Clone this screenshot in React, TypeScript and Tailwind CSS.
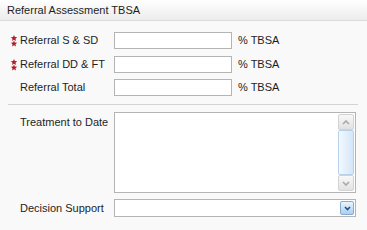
import React from "react";

const font = { fontFamily: '"Liberation Sans", Arial, sans-serif' };

function Stars() {
  return (
    <svg width="8" height="12" viewBox="0 0 8 12" className="block">
      <polygon
        points="4,0 4.9,2.1 7.2,2.3 5.5,3.8 6,6 4,4.8 2,6 2.5,3.8 0.8,2.3 3.1,2.1"
        fill="#b0202a"
      />
      <polygon
        points="4,5.5 4.9,7.6 7.2,7.8 5.5,9.3 6,11.5 4,10.3 2,11.5 2.5,9.3 0.8,7.8 3.1,7.6"
        fill="#b0202a"
      />
    </svg>
  );
}

function Row({ label, required }: { label: string; required?: boolean }) {
  return (
    <div className="flex h-[17px] items-center">
      <div className="flex w-[12px] justify-center">{required && <Stars />}</div>
      <div className="w-[94px] text-[11px] text-[#1e1e1e]">{label}</div>
      <div className="h-[17px] w-[118px] border border-[#b4b4b4] bg-white" />
      <div className="ml-[6px] text-[11px] text-[#1e1e1e]">% TBSA</div>
    </div>
  );
}

export default function App() {
  return (
    <div className="h-[230px] w-[367px] overflow-hidden bg-[#f9f9f9]" style={font}>
      {/* header */}
      <div className="flex h-[21px] items-center border-b border-[#dadada] bg-gradient-to-b from-white to-[#ececec] pl-[7px] text-[11px] text-[#1e1e1e]">
        Referral Assessment TBSA
      </div>

      <div className="pl-[8px] pt-[11px]">
        <div className="flex flex-col">
          <Row label="Referral S & SD" required />
          <div className="h-[7px]" />
          <Row label="Referral DD & FT" required />
          <div className="h-[6px]" />
          <Row label="Referral Total" />
        </div>

        <div className="mt-[8px] h-px w-[350px] bg-[#d4d4d4]" />

        {/* treatment */}
        <div className="mt-[7px] flex">
          <div className="w-[12px]" />
          <div className="w-[94px] pt-[2px] text-[11px] text-[#1e1e1e]">Treatment to Date</div>
          <div className="flex h-[81px] w-[242px] justify-end border border-[#b4b4b4] bg-white p-px">
            <div className="flex w-[16px] flex-col">
              <div className="flex h-[16px] items-center justify-center rounded-[2px] border border-[#d2d2d2] bg-gradient-to-b from-[#f8f8f8] to-[#e2e2e2]">
                <svg width="8" height="5" viewBox="0 0 8 5">
                  <path d="M1 4 L4 1 L7 4" fill="none" stroke="#a8a8a8" strokeWidth="1.6" />
                </svg>
              </div>
              <div className="flex-1 rounded-[2px] border border-[#b6d1ea] bg-gradient-to-r from-[#f4f9fe] to-[#d3e6f8]" />
              <div className="flex h-[16px] items-center justify-center rounded-[2px] border border-[#d2d2d2] bg-gradient-to-b from-[#f8f8f8] to-[#e2e2e2]">
                <svg width="8" height="5" viewBox="0 0 8 5">
                  <path d="M1 1 L4 4 L7 1" fill="none" stroke="#a8a8a8" strokeWidth="1.6" />
                </svg>
              </div>
            </div>
          </div>
        </div>

        {/* decision support */}
        <div className="mt-[6px] flex items-center">
          <div className="w-[12px]" />
          <div className="w-[94px] text-[11px] text-[#1e1e1e]">Decision Support</div>
          <div className="flex h-[18px] w-[242px] items-center justify-end border border-[#b4b4b4] bg-white pr-px">
            <div className="flex h-[14px] w-[14px] items-center justify-center rounded-[2px] border border-[#86acd6] bg-gradient-to-b from-[#eaf4fd] to-[#aacff1]">
              <svg width="7" height="5" viewBox="0 0 7 5">
                <path d="M1 1 L3.5 3.5 L6 1" fill="none" stroke="#1f4f8a" strokeWidth="1.6" />
              </svg>
            </div>
          </div>
        </div>
      </div>
    </div>
  );
}
